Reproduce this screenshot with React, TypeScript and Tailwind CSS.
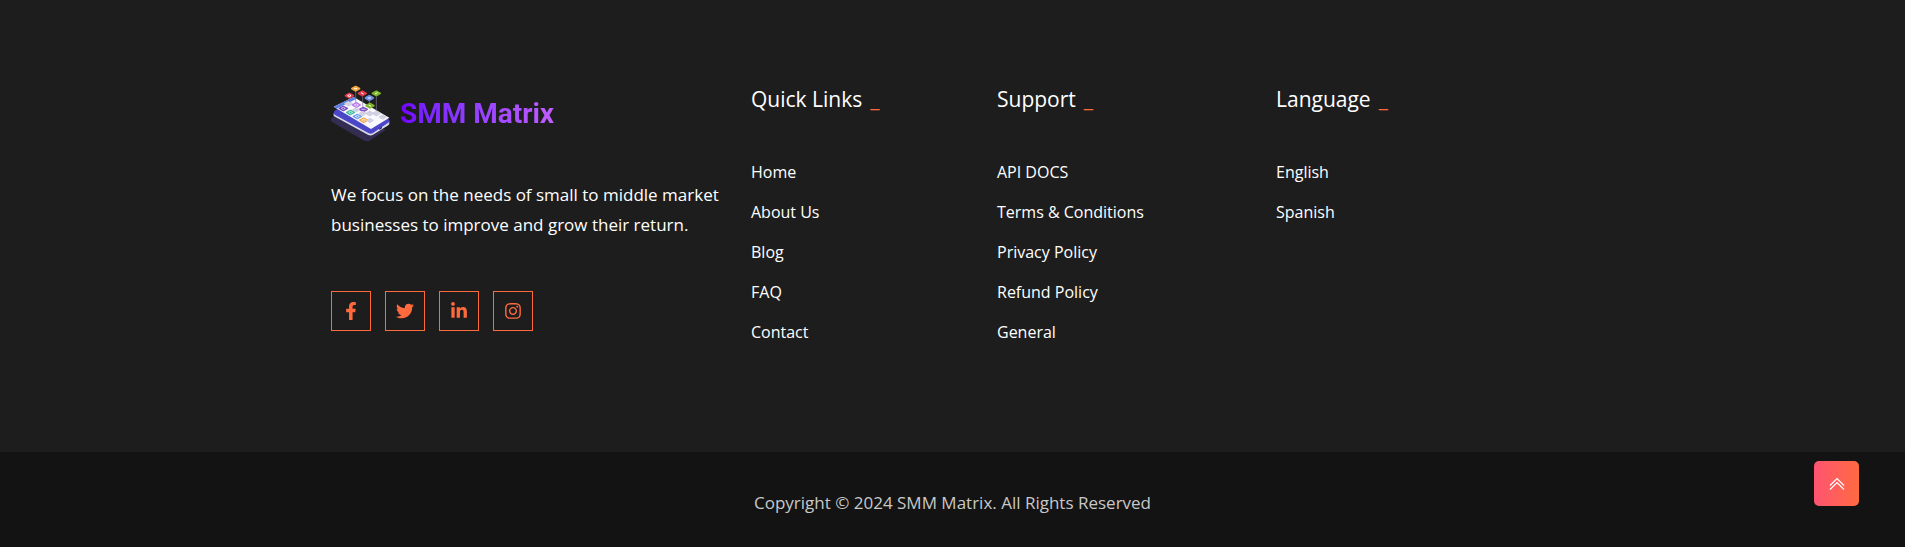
import { ReactNode } from "react";
import { FaFacebookF, FaInstagram, FaLinkedinIn, FaTwitter } from "react-icons/fa";

interface FooterColumnProps {
  title: string;
  links: string[];
}

const App = () => {
  return (
    <footer className="w-full bg-[#1d1d1d] text-white font-['Open_Sans',sans-serif] text-base">
      <div className="px-6 pt-[85px] pb-[105px]">
        <div className="mx-auto max-w-[1243px] grid grid-cols-1 gap-y-10 sm:grid-cols-2 lg:grid-cols-[420fr_246fr_279fr_298fr]">
          <div>
            <Logo />
            <p className="mt-[37px] pr-4 text-[17px] font-medium leading-[30px]">
              We focus on the needs of small to middle market businesses to improve and grow their return.
            </p>
            <div className="mt-[51px] flex gap-3.5">
              <SocialLink label="Facebook" icon={<FaFacebookF />} />
              <SocialLink label="Twitter" icon={<FaTwitter />} />
              <SocialLink label="LinkedIn" icon={<FaLinkedinIn />} />
              <SocialLink label="Instagram" icon={<FaInstagram />} />
            </div>
          </div>
          <FooterColumn title="Quick Links" links={["Home", "About Us", "Blog", "FAQ", "Contact"]} />
          <FooterColumn
            title="Support"
            links={["API DOCS", "Terms & Conditions", "Privacy Policy", "Refund Policy", "General"]}
          />
          <FooterColumn title="Language" links={["English", "Spanish"]} />
        </div>
      </div>
      <div className="bg-[#131313] px-6 pt-9 pb-[29px]">
        <p className="text-center text-[17px] leading-[30px] text-[#c8c8c8]">
          Copyright © 2024 SMM Matrix. All Rights Reserved
        </p>
      </div>
      <ScrollTopButton />
    </footer>
  );
};

const Logo = () => {
  return (
    <a href="#" className="flex items-center gap-2">
      <PhoneMark />
      <span className="bg-linear-to-r from-[#6f00ff] to-[#c05cff] bg-clip-text font-['Roboto',sans-serif] text-[28px] leading-9 font-bold text-transparent">
        SMM Matrix
      </span>
    </a>
  );
};

const PhoneMark = () => {
  return (
    <svg viewBox="34 30 183 174" className="h-[58px] w-[61px]" aria-hidden="true">
      {/* shadow and phone body */}
      <path d="M34 130l52-27 112 62-48 32q-8 4-16 0L37 141q-6-5-3-11z" fill="#332d52" />
      <path d="M42 114v9l104 57q8 3 14-1l46-28q4-3 3-12z" fill="#d9d9ea" />
      <path d="M44 108l54-36 109 60q4 5 1 10l-48 32q-7 4-14 0L45 119q-5-5-1-11z" fill="#4b46c8" />
      <path d="M179 160l8-5v5l-8 5z" fill="#2d2858" />
      {/* screen */}
      <path d="M42 95l60-29 107 62-55 34z" fill="#f8f8fd" />
      <path d="M42 95l60-29 9 5-60 30z" fill="#5b7fe0" />
      {/* app tiles */}
      <g strokeLinejoin="round" strokeWidth="4">
        <path d="M76 86l11-6 11 6-11 7z" fill="#d2d0e3" stroke="#d2d0e3" />
        <path d="M59 100l12-6 12 6-12 7z" fill="#7143bd" stroke="#7143bd" />
        <path d="M98 90l12-7 12 7-12 7z" fill="#b875ed" stroke="#b875ed" />
        <path d="M81 112l12-6 11 6-12 7z" fill="#38b99b" stroke="#38b99b" />
        <path d="M119 103l12-6 12 6-12 7z" fill="#8056c7" stroke="#8056c7" />
        <path d="M101 124l12-6 12 6-12 7z" fill="#6f9ef0" stroke="#6f9ef0" />
        <path d="M139 115l11-6 11 6-11 7z" fill="#d2d0e3" stroke="#d2d0e3" />
        <path d="M120 135l12-6 12 6-12 7z" fill="#f4a63d" stroke="#f4a63d" />
        <path d="M159 115l11-6 11 6-11 7z" fill="#d2d0e3" stroke="#d2d0e3" />
        <path d="M100 104l9-5 9 5-9 6z" fill="#d2d0e3" stroke="#d2d0e3" />
        <path d="M120 115l9-5 9 5-9 6z" fill="#d2d0e3" stroke="#d2d0e3" />
        <path d="M142 136l9-5 9 5-9 6z" fill="#d2d0e3" stroke="#d2d0e3" />
        <path d="M179 126l10-5 10 5-10 6z" fill="#d2d0e3" stroke="#d2d0e3" />
      </g>
      <g fill="none" stroke="#fff" strokeWidth="2">
        <path d="M65 100l6-3 6 3-6 4zM104 90l6-3 6 3-6 4zM87 112l6-3 6 3-6 4zM125 103h12M107 124l6-3 6 3-6 4zM126 135l6-3 6 3-6 4z" />
      </g>
      {/* floating icons */}
      <path d="M108 44v38M89 66v15M129 60v35M149 72v18M170 60v48" stroke="#7b7891" strokeWidth="2" />
      <g strokeLinejoin="round" strokeWidth="6">
        <path d="M97 41l11-6 11 6-11 6z" fill="#f5a83d" stroke="#f5a83d" />
        <path d="M78 62l11-6 11 6-11 6z" fill="#e43b4c" stroke="#e43b4c" />
        <path d="M117 55l11-6 11 6-11 6z" fill="#e43b4c" stroke="#e43b4c" />
        <path d="M138 69l11-6 11 6-11 6z" fill="#6d91e6" stroke="#6d91e6" />
        <path d="M159 55l11-6 11 6-11 6z" fill="#7db629" stroke="#7db629" />
        <path d="M140 92l11-6 11 6-11 6z" fill="#7db629" stroke="#7db629" />
      </g>
      <path
        d="M103 41h10M84 62l5-3 5 3-5 3zM124 53l8 4M144 69h10M166 57l8-4M147 90l7 4"
        fill="none"
        stroke="#fff"
        strokeWidth="3"
      />
    </svg>
  );
};

const SocialLink = ({ label, icon }: { label: string; icon: ReactNode }) => {
  return (
    <a
      href="#"
      aria-label={label}
      className="flex size-10 items-center justify-center border border-[#ff6a3d] text-lg text-[#ff6a3d]"
    >
      {icon}
    </a>
  );
};

const FooterColumn = ({ title, links }: FooterColumnProps) => {
  return (
    <div>
      <h5 className="flex gap-2 text-[21px] leading-7">
        {title} <span className="text-[#ff6a3d]">_</span>
      </h5>
      <ul className="mt-11 flex flex-col gap-2.5">
        {links.map((link) => (
          <li key={link} className="leading-[30px]">
            <a href="#">{link}</a>
          </li>
        ))}
      </ul>
    </div>
  );
};

const ScrollTopButton = () => {
  return (
    <button
      type="button"
      aria-label="Back to top"
      className="fixed right-[46px] bottom-[41px] flex size-[45px] items-center justify-center rounded-[5px] bg-linear-to-r from-[#ff5370] to-[#ff6a3d]"
    >
      <svg viewBox="0 0 16 16" className="size-4" fill="none" stroke="white" strokeWidth="1.2" aria-hidden="true">
        <path d="M1 9.5L8 2.5l7 7M1 13.5l7-7 7 7" />
      </svg>
    </button>
  );
};

export default App;
